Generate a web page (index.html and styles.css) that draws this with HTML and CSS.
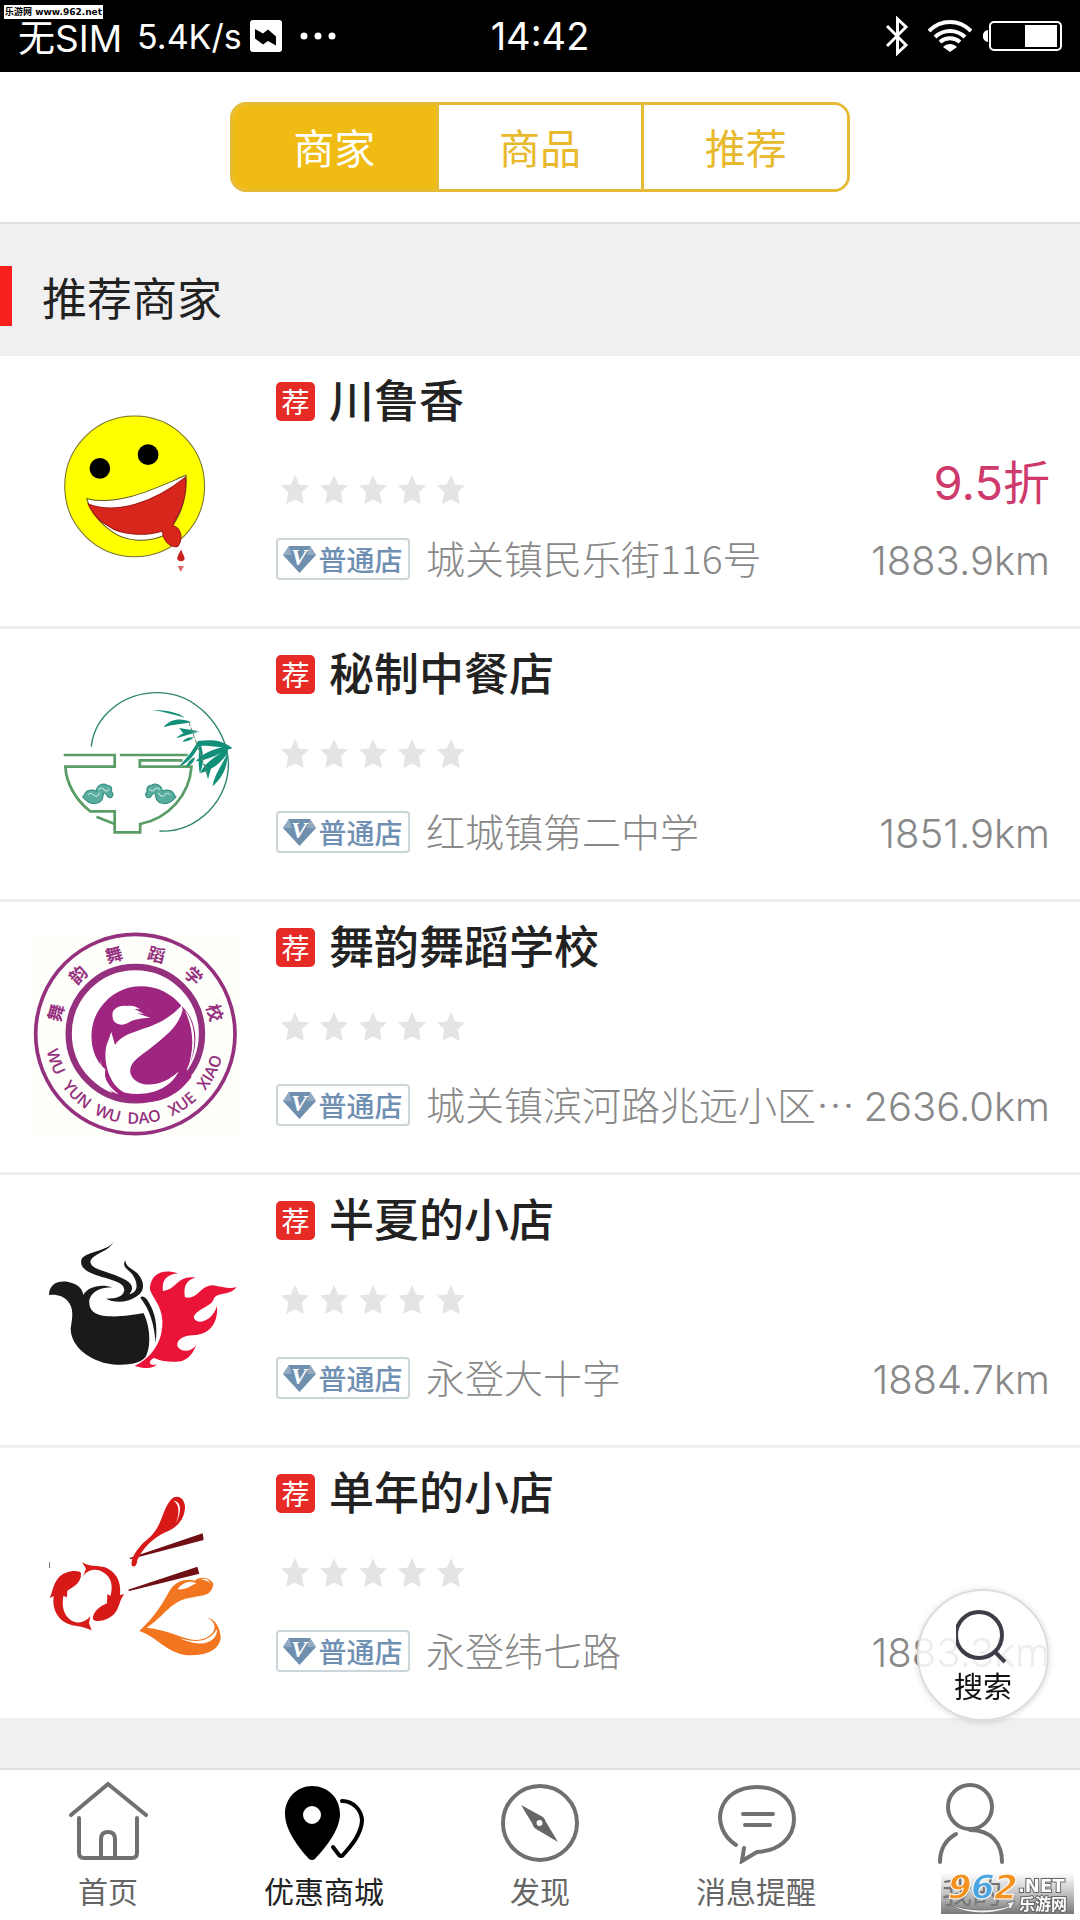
FILE: index.html
```html
<!DOCTYPE html>
<html lang="zh-CN">
<head>
    <meta charset="UTF-8">
    <meta name="viewport" content="width=device-width, initial-scale=1.0">
    <title>优惠商城</title>
    <link rel="stylesheet" href="styles.css">
</head>
<body>
    <svg class="defs" aria-hidden="true">
        <symbol id="star" viewBox="0 0 28 29">
            <path d="M14 0l4.200 9.400 9.800 1-7.200 6.900 2 11.700-8.800-4.600L5.200 29l2-11.700L0 10.400l9.800-1z"/>
        </symbol>
        <symbol id="stars" viewBox="0 0 184 29">
            <use href="#star" x="0" width="28" height="29"/>
            <use href="#star" x="39" width="28" height="29"/>
            <use href="#star" x="78" width="28" height="29"/>
            <use href="#star" x="117" width="28" height="29"/>
            <use href="#star" x="156" width="28" height="29"/>
        </symbol>
        <symbol id="diamond" viewBox="0 0 33 28">
            <path fill="#6f8fae" d="M6 1h21l6 9-16.500 18L0 10z"/>
            <path fill="#92aac2" d="M6 1l3 9H0zM27 1l-3 9h9z"/>
            <text x="16" y="20" text-anchor="middle" font-family="Liberation Serif, serif" font-size="24" font-weight="bold" font-style="italic" fill="#fff">V</text>
        </symbol>
    </svg>

    <div class="status-bar">
        <div class="status-left">
            <span class="sim">无SIM</span>
            <span class="speed">5.4K/s</span>
            <svg class="app-mark" viewBox="0 0 32 32">
                <rect width="32" height="32" rx="3" fill="#fff"/>
                <path d="M5 9l8 4.500 5-4 8 7v9l-8-4.500-5 3.500-8-6z"/>
            </svg>
            <svg class="dots" viewBox="0 0 36 8" fill="#fff"><circle cx="4" cy="4" r="3.500"/><circle cx="18" cy="4" r="3.500"/><circle cx="32" cy="4" r="3.500"/></svg>
        </div>
        <div class="clock">14:42</div>
        <div class="status-right">
            <svg class="bluetooth" viewBox="0 0 22 40" fill="none" stroke="#fff" stroke-width="3"><path d="M1 10l19 19-8.500 8V3l8.500 8L1 30"/></svg>
            <svg class="wifi" viewBox="0 0 44 32" fill="none" stroke="#fff" stroke-width="4">
                <path d="M1 11C13-1 31-1 43 11M7 17c9-8 21-8 30 0M12 22c6-5 14-5 20 0"/>
                <path fill="#fff" stroke="none" d="M15 27c4-4 10-4 14 0l-7 5z"/>
            </svg>
            <svg class="battery" viewBox="0 0 79 30">
                <path fill="#fff" d="M5 9v12c-7-1-7-11 0-12z"/>
                <rect x="7" y="1" width="71" height="28" rx="4" fill="none" stroke="#fff" stroke-width="2"/>
                <rect x="42" y="4" width="32" height="22" fill="#fff"/>
            </svg>
        </div>
        <span class="site-mark">乐游网 www.962.net</span>
    </div>

    <header class="header">
        <div class="segment">
            <button type="button" class="active">商家</button>
            <button type="button">商品</button>
            <button type="button">推荐</button>
        </div>
    </header>

    <main class="main">
        <h1 class="section-title">推荐商家</h1>
        <ul class="shop-list">
            <li>
                <a class="shop" href="#">
                    <svg class="logo" viewBox="93 108 598 618" preserveAspectRatio="none">
                        <ellipse cx="391" cy="409" rx="203" ry="211" fill="#ff0" stroke="#77702a" stroke-width="3"/>
                        <ellipse cx="290" cy="355" rx="30" ry="31"/>
                        <ellipse cx="430" cy="314" rx="30" ry="31"/>
                        <path fill="#fff" stroke="#5c5a20" stroke-width="3" d="M252 446C345 470 450 415 540 376C545 430 528 490 500 528L480 555C430 577 370 578 325 545C285 515 262 485 252 446z"/>
                        <path fill="#d8261c" stroke="#a01812" stroke-width="3" d="M256 462C340 495 450 455 538 382C543 430 530 475 507 512L502 527C530 535 530 570 517 588C500 597 472 575 472 543C420 560 350 555 315 528C285 512 268 490 256 462z"/>
                        <path fill="#c8201c" d="M526 598c-6 14-16 26-9 33 7 5 20 3 19-6-1-10-8-16-10-27z"/>
                        <path fill="#d66" d="M516 648h18l-9 18z"/>
                    </svg>
                    <div class="info">
                        <h2 class="name"><span class="badge">荐</span>川鲁香</h2>
                        <div class="rate">
                            <svg class="stars"><use href="#stars"/></svg>
                            <span class="discount">9.5折</span>
                        </div>
                        <div class="place">
                            <span class="level"><svg><use href="#diamond"/></svg>普通店</span>
                            <span class="address">城关镇民乐街116号</span>
                            <span class="distance">1883.9km</span>
                        </div>
                    </div>
                </a>
            </li>
            <li>
                <a class="shop" href="#">
                    <svg class="logo" viewBox="93 57 598 618" preserveAspectRatio="none">
                        <g fill="none" stroke="#2d8570" stroke-width="4">
                            <path d="M265 320C275 225 360 157 460 158C570 160 655 260 663 365C668 475 575 580 463 573"/>
                        </g>
                        <g fill="none" stroke="#5a9d66" stroke-width="8">
                            <path d="M185 345H333V380H190C192 430 220 480 262 514H333V577H407V552C490 535 550 465 556 380H406V361H530M348 345H545M280 530L333 552"/>
                        </g>
                        <g fill="#118f79">
                            <path d="M443 211c35-2 75 6 94 22-30-8-60-18-94-22zM475 262c20-28 55-28 80-15-30 6-55 7-80 15zM520 264l60 10-48 6zM512 295c15-18 35-20 62-17-25 4-42 10-62 17zM530 306c8-12 18-14 32-14-8 9-17 12-32 14z"/>
                            <path d="M675 325C640 295 605 300 575 303c-15 28-30 48-55 76 30-12 45-36 58-60 0 30-4 50 2 80 12-22 12-55 4-82 20 0 40 2 60 5-30 8-54 18-76 42 30-4 60-15 86-34-38 26-62 42-73 70 35-10 62-32 80-62-20 45-38 65-44 101 32-28 46-65 44-110z"/>
                            <path d="M566 352c-16 6-22 20-26 28 15-4 24-14 26-28zM590 370l14 48 8-30z"/>
                        </g>
                        <path d="M548 245L605 410" stroke="#6a8c72" stroke-width="3" stroke-dasharray="14 5"/>
                        <g fill="#58ad9f" stroke="#308c7e" stroke-width="3">
                            <path d="M240 471c5-2 5-18 20-20 10-2 15 0 20 2 0-18 20-25 30-18 14 0 16 12 14 20 8 8 2 20-5 18-10 0-8-14-18-14-3 10 0 28-22 31-20 4-30-10-39-19z"/>
                            <path d="M511 471c-5-2-5-18-20-20-10-2-15 0-20 2 0-18-20-25-30-18-14 0-16 12-14 20-8 8-2 20 5 18 10 0 8-14 18-14 3 10 0 28 22 31 20 4 30-10 39-19z"/>
                            <path fill="none" stroke="#c8e8e0" d="M256 465q8-10 16 0t18-6M286 449q8-10 16 0t14-3M494 465q-8-10-16 0t-18-6M464 449q-8-10-16 0t-14-3"/>
                        </g>
                    </svg>
                    <div class="info">
                        <h2 class="name"><span class="badge">荐</span>秘制中餐店</h2>
                        <div class="rate"><svg class="stars"><use href="#stars"/></svg></div>
                        <div class="place">
                            <span class="level"><svg><use href="#diamond"/></svg>普通店</span>
                            <span class="address">红城镇第二中学</span>
                            <span class="distance">1851.9km</span>
                        </div>
                    </div>
                </a>
            </li>
            <li>
                <a class="shop" href="#">
                    <svg class="logo" viewBox="96 66 618 618">
                        <rect x="96" y="66" width="618" height="618" fill="#fefefa"/>
                        <circle cx="406" cy="372" r="299" fill="none" stroke="#95307f" stroke-width="11"/>
                        <circle cx="406" cy="371" r="200" fill="#fff" stroke="#95307f" stroke-width="19"/>
                        <!-- bird -->
                        <path fill="#9f2680" d="M316 478C268 440 260 350 300 295C360 205 485 210 545 288C605 345 590 430 560 478L575 500C510 590 420 590 340 552C322 530 312 505 316 478z"/>
                        <path fill="#fff" d="M548 300C535 350 500 375 455 412C420 440 380 460 393 495C412 535 485 535 536 484C510 540 440 562 375 548C325 525 308 450 320 405L334 366L345 405C380 350 470 370 545 286zM554 300C592 345 590 420 563 476C585 410 580 355 554 300z"/>
                        <path fill="#fff" d="M338 322C332 295 360 285 380 288C398 285 410 290 420 298L403 297L432 311L412 310L452 324C420 324 400 328 382 340C362 350 338 340 338 322z"/>
                        <path fill="#fff" d="M302 450C308 500 325 530 355 552C325 545 300 510 302 450z"/>
                        <g class="seal-cn">
                            <text x="406" y="145" transform="rotate(-75 406 372)">舞</text>
                            <text x="406" y="145" transform="rotate(-44 406 372)">韵</text>
                            <text x="406" y="145" transform="rotate(-15 406 372)">舞</text>
                            <text x="406" y="145" transform="rotate(15 406 372)">蹈</text>
                            <text x="406" y="145" transform="rotate(45 406 372)">学</text>
                            <text x="406" y="145" transform="rotate(75 406 372)">校</text>
                        </g>
                        <path id="sealArc" fill="none" d="M136 372A270 270 0 0 0 676 372"/>
                        <g class="seal-en">
                            <text><textPath href="#sealArc" startOffset="91">WU</textPath></text>
                            <text><textPath href="#sealArc" startOffset="217">YUN</textPath></text>
                            <text><textPath href="#sealArc" startOffset="335">WU</textPath></text>
                            <text><textPath href="#sealArc" startOffset="452">DAO</textPath></text>
                            <text><textPath href="#sealArc" startOffset="582">XUE</textPath></text>
                            <text><textPath href="#sealArc" startOffset="720">XIAO</textPath></text>
                        </g>
                    </svg>
                    <div class="info">
                        <h2 class="name"><span class="badge">荐</span>舞韵舞蹈学校</h2>
                        <div class="rate"><svg class="stars"><use href="#stars"/></svg></div>
                        <div class="place">
                            <span class="level"><svg><use href="#diamond"/></svg>普通店</span>
                            <span class="address">城关镇滨河路兆远小区门口</span>
                            <span class="distance">2636.0km</span>
                        </div>
                    </div>
                </a>
            </li>
            <li>
                <a class="shop" href="#">
                    <svg class="logo" viewBox="96 15 618 618">
                        <g fill="#1a1a1a">
                            <path d="M147 285C147 252 175 240 205 246C235 252 248 268 250 285C262 262 300 250 338 262C300 262 275 275 268 300C265 335 290 348 330 349C370 350 400 345 430 339C450 375 455 440 436 472C415 498 350 498 310 488C250 470 212 430 212 385C218 350 222 325 203 303C190 288 170 282 147 285z"/>
                            <path d="M342 125C320 160 275 160 271 186C275 210 320 212 360 232C395 246 405 262 388 283C415 278 415 250 398 224C380 205 365 200 376 180C376 200 395 205 412 220C440 250 430 280 408 290C380 310 340 308 318 296C350 296 370 290 373 270C372 245 330 240 290 226C255 214 240 200 244 180C250 155 320 155 342 125z"/>
                            <path d="M421 293C425 286 435 290 442 300C465 335 474 375 467 428C462 370 450 330 421 293z"/>
                        </g>
                        <path fill="#ea1439" d="M404 498C440 480 490 440 487 360C485 310 445 280 450 260C455 220 490 205 533 220C495 225 485 245 489 273C530 270 530 225 587 233C555 240 550 265 555 292C595 300 600 255 640 256C670 262 690 268 710 261C690 288 655 275 642 295C638 320 590 325 581 352C585 375 635 370 651 318C655 375 625 400 590 405C545 405 530 420 532 438C545 460 575 455 589 435C575 470 555 488 520 485C500 485 480 483 462 474C440 485 450 500 470 493C460 508 430 506 404 498z"/>
                    </svg>
                    <div class="info">
                        <h2 class="name"><span class="badge">荐</span>半夏的小店</h2>
                        <div class="rate"><svg class="stars"><use href="#stars"/></svg></div>
                        <div class="place">
                            <span class="level"><svg><use href="#diamond"/></svg>普通店</span>
                            <span class="address">永登大十字</span>
                            <span class="distance">1884.7km</span>
                        </div>
                    </div>
                </a>
            </li>
            <li>
                <a class="shop" href="#">
                    <svg class="logo" viewBox="96 54 618 618">
                        <path fill="#777" d="M147 307h3v17h-3z"/>
                        <!-- fish -->
                        <path fill="#d71a18" d="M243 340C240 328 190 330 172 358C158 378 158 395 149 415L161 408C155 450 175 480 205 492C225 500 240 496 275 511L267 490L271 469C255 488 235 492 215 482C190 465 185 440 190 408L201 412L202 392C222 380 245 368 243 340z"/>
                        <path fill="#d71a18" d="M246 306L258 326L250 347C265 327 290 325 308 336C335 350 340 380 331 408L322 402L321 430C300 438 280 455 278 476C284 490 335 484 352 448C362 425 362 415 373 403L360 405C365 360 345 335 315 322C290 315 270 322 246 306z"/>
                        <!-- chopsticks and spoon -->
                        <path fill="#701014" d="M389 294L608 220L611 240L390 298zM384 389L592 320L598 341L388 393z"/>
                        <path fill="#d71a18" d="M512 120C525 102 552 108 555 138C556 175 530 205 498 216C465 230 430 260 412 300C410 318 404 322 396 318C390 300 405 275 430 248C490 205 480 160 512 120z"/>
                        <path fill="#fff" d="M521 122C545 125 545 155 528 190C538 160 540 135 521 122z"/>
                        <path fill="#f27620" d="M418 513C470 465 490 425 510 390C530 358 565 355 585 362C600 345 635 355 640 372C635 410 605 405 580 412C510 420 500 465 440 503C500 508 545 535 585 540C625 540 645 515 644 500C642 485 633 478 622 473C645 475 662 505 662 535C655 580 600 590 550 584C490 570 470 530 418 513z"/>
                        <path fill="#fff" d="M533 388C545 370 568 358 589 370C575 375 565 390 533 388zM602 358C615 352 628 360 630 369C622 362 612 360 602 358zM540 535C590 550 630 545 650 507C655 530 630 555 590 550C570 548 555 542 540 535z"/>
                    </svg>
                    <div class="info">
                        <h2 class="name"><span class="badge">荐</span>单年的小店</h2>
                        <div class="rate"><svg class="stars"><use href="#stars"/></svg></div>
                        <div class="place">
                            <span class="level"><svg><use href="#diamond"/></svg>普通店</span>
                            <span class="address">永登纬七路</span>
                            <span class="distance">1883.3km</span>
                        </div>
                    </div>
                </a>
            </li>
        </ul>
    </main>

    <nav class="tab-bar">
        <a href="#">
            <svg viewBox="0 0 80 84"><path d="M3 35L40 4l38 31M11 38v35q0 5 5 5h48q5 0 5-5V38M33 78V59q0-7 7-7t7 7v19"/></svg>
            首页
        </a>
        <a href="#" class="active">
            <svg viewBox="0 0 80 84">
                <path class="solid" fill-rule="evenodd" d="M28 6C44 6 56 18 56 34C56 52 38 71 31 79Q28 81 25 79C18 71 1 52 1 34C1 18 13 6 28 6zM28 26a9 9 0 1 0 0 18a9 9 0 1 0 0-18z"/>
                <path d="M58 21C70 21 78 31 78 41C77 55 66 67 59 75Q57 77 55 75L49 67"/>
            </svg>
            优惠商城
        </a>
        <a href="#">
            <svg viewBox="0 0 80 84">
                <circle cx="40" cy="43" r="37"/>
                <path class="solid" fill-rule="evenodd" d="M21 25L43 37Q45 39 46 42L58 62L36 49Q33 47 32 43zM39.500 40a3 3 0 1 0 0 6a3 3 0 1 0 0-6z"/>
            </svg>
            发现
        </a>
        <a href="#">
            <svg viewBox="0 0 80 84"><path d="M20 65C-8 46 2 7 41 7C65 7 78 22 78 39C78 58 63 71 41 72L26 81L28 68M27 34h30M29 45h25"/></svg>
            消息提醒
        </a>
        <a href="#">
            <svg viewBox="0 0 80 84"><circle cx="38" cy="27" r="22"/><path d="M24 54Q8 63 8 82M38 50C60 50 70 64 70 82"/></svg>
            我的
        </a>
    </nav>

    <button type="button" class="search">
        <svg viewBox="3 0 54 56"><circle cx="26" cy="26" r="23"/><path d="M42 43l10 10"/></svg>
        搜索
    </button>

    <svg class="corner-mark" viewBox="0 0 133 42">
        <defs>
            <linearGradient id="fade" x2="0" y2="1"><stop offset="0" stop-color="#999" stop-opacity="0"/><stop offset="1" stop-color="#777"/></linearGradient>
        </defs>
        <rect width="133" height="42" fill="url(#fade)"/>
        <path fill="#eee" stroke="#777" d="M8 32C25 39 50 40 68 34L66 31L74 29L70 37L68 36C48 44 22 42 8 32z"/>
        <g class="corner-num">
            <text x="7" y="27" fill="#f3921f">9</text>
            <text x="30" y="27" fill="#4ba6e0">6</text>
            <text x="53" y="27" fill="#f3921f">2</text>
        </g>
        <text class="corner-net" x="77" y="20">.NET</text>
        <text class="corner-cn" x="78" y="38">乐游网</text>
    </svg>
</body>
</html>
```
FILE: styles.css
```css
html,body{
    margin: 0;
    padding: 0;
}
body{
    display: flex;
    flex-direction: column;
    min-height: 100vh;
    background-color: #f0f0f0;
    color: #222;
    font-family: "Noto Sans CJK SC", sans-serif;
}
button{
    padding: 0;
    font-family: inherit;
    cursor: pointer;
}
a{
    color: inherit;
    text-decoration: none;
}
h1,h2,ul{
    margin: 0;
    padding: 0;
}
.defs{
    position: absolute;
    width: 0;
    height: 0;
}

/* status bar */
.status-bar{
    position: relative;
    display: grid;
    grid-template-columns: 1fr auto 1fr;
    align-items: center;
    height: 72px;
    padding: 0 18px;
    background-color: #000;
    color: #fff;
    font-family: Inter, "Noto Sans CJK SC", sans-serif;
}
.status-left,.status-right{
    display: flex;
    align-items: center;
}
.status-right{
    justify-content: flex-end;
}
.sim{
    margin-right: 15px;
    font-size: 37px;
}
.speed{
    font-size: 34px;
}
.clock{
    font-size: 38px;
}
.app-mark{
    width: 32px;
    height: 32px;
    margin: 0 18px 0 8px;
}
.dots{
    width: 36px;
    height: 8px;
}
.bluetooth{
    width: 22px;
    height: 40px;
    margin-right: 20px;
}
.wifi{
    width: 44px;
    height: 32px;
    margin-right: 11px;
}
.battery{
    width: 79px;
    height: 30px;
}
.site-mark{
    position: absolute;
    top: 5px;
    left: 4px;
    padding: 0 1px;
    background-color: #fff;
    color: #000;
    font: bold 9px/14px "DejaVu Sans", "Noto Sans CJK SC", sans-serif;
}

/* header */
.header{
    display: flex;
    justify-content: center;
    padding: 30px 0;
    border-bottom: 2px solid #e2e2e2;
    background-color: #fff;
}
.segment{
    display: flex;
    width: 620px;
    height: 90px;
    box-sizing: border-box;
    border: 3px solid #e5bb35;
    border-radius: 16px;
    overflow: hidden;
}
.segment button{
    flex: 1;
    padding-bottom: 2px;
    border: 0;
    background-color: #fff;
    color: #e8b92c;
    font-size: 41px;
}
.segment button+button{
    border-left: 3px solid #e5bb35;
}
.segment .active{
    background-color: #f0bb12;
    color: #fff;
}

/* shops */
.main{
    flex: 1;
}
.section-title{
    display: flex;
    align-items: center;
    height: 132px;
    padding-top: 12px;
    box-sizing: border-box;
    color: #222;
    font-size: 45px;
    font-weight: normal;
}
.section-title::before{
    content: "";
    width: 12px;
    height: 60px;
    margin-right: 30px;
    background-color: #f8201c;
}
.shop-list{
    list-style: none;
    background-color: #fff;
}
.shop-list li+li{
    border-top: 3px solid #eee;
}
.shop{
    display: flex;
    gap: 38px;
    padding: 22px 30px 46px 32px;
}
.logo{
    flex: none;
    width: 206px;
    height: 206px;
    margin: 8px 0 -12px;
}
.info{
    flex: 1;
    min-width: 0;
    display: flex;
    flex-direction: column;
}
.name{
    display: flex;
    align-items: flex-start;
    gap: 14px;
    height: 48px;
    font-size: 45px;
    font-weight: 500;
    line-height: 42px;
}
.badge{
    width: 39px;
    margin-top: 4px;
    border-radius: 5px;
    background-color: #e62b26;
    color: #fff;
    font-size: 28px;
    font-weight: normal;
    line-height: 39px;
    text-align: center;
}
.rate{
    display: flex;
    align-items: flex-end;
    justify-content: space-between;
    margin-top: 40px;
    padding-left: 5px;
}
.stars{
    width: 184px;
    height: 29px;
    fill: #e4e4e4;
}
.discount{
    padding-bottom: 4px;
    color: #cf3a6c;
    font-family: Inter, "Noto Sans CJK SC", sans-serif;
    font-size: 47px;
    line-height: 34px;
}
.place{
    display: flex;
    align-items: center;
    gap: 16px;
    height: 42px;
    margin-top: auto;
    color: #888;
    font-size: 39px;
    font-weight: 300;
}
.level{
    flex: none;
    display: flex;
    align-items: center;
    justify-content: center;
    gap: 2px;
    width: 134px;
    height: 42px;
    box-sizing: border-box;
    border: 2px solid #ccd5da;
    border-radius: 4px;
    color: #6f8fb3;
    font-size: 28px;
    font-weight: 500;
}
.level svg{
    width: 33px;
    height: 28px;
}
.address{
    flex: 1;
    margin: 0 -12px 4px 0;
    overflow: hidden;
    line-height: 60px;
    text-overflow: ellipsis;
    white-space: nowrap;
}
.distance{
    padding-top: 2px;
    font-family: Inter, "Noto Sans CJK SC", sans-serif;
    font-size: 40px;
}
.seal-cn{
    fill: #95307f;
    font-size: 52px;
    font-weight: bold;
    text-anchor: middle;
}
.seal-en{
    fill: #95307f;
    font-family: "Open Sans", sans-serif;
    font-size: 48px;
    font-weight: 600;
    text-anchor: middle;
}

/* search button */
.search{
    position: fixed;
    right: 31px;
    bottom: 199px;
    display: flex;
    flex-direction: column;
    align-items: center;
    justify-content: center;
    width: 132px;
    height: 132px;
    padding-top: 4px;
    border: 2px solid #ddd;
    border-radius: 50%;
    background-color: rgba(255,255,255,.85);
    box-shadow: 0 1px 6px rgba(0,0,0,.15);
    color: #111;
    font-size: 29px;
    line-height: 40px;
}
.search svg{
    width: 54px;
    height: 56px;
    fill: none;
    stroke: #3d3d47;
    stroke-width: 4;
}

/* bottom tabs */
.tab-bar{
    display: flex;
    height: 150px;
    border-top: 2px solid #e2e2e2;
    background-color: #fff;
}
.tab-bar a{
    flex: 1;
    display: flex;
    flex-direction: column;
    align-items: center;
    gap: 4px;
    padding-top: 10px;
    color: #666;
    font-size: 30px;
    line-height: 44px;
}
.tab-bar svg{
    width: 80px;
    height: 84px;
    fill: none;
    stroke: #707070;
    stroke-width: 4;
    stroke-linecap: round;
}
.tab-bar .solid{
    fill: #666;
    stroke: none;
}
.tab-bar .active{
    color: #222;
}
.tab-bar .active svg{
    stroke: #000;
}
.tab-bar .active .solid{
    fill: #000;
}

/* site mark in the corner */
.corner-mark{
    position: fixed;
    right: 6px;
    bottom: 6px;
    width: 133px;
    height: 42px;
    font-family: "DejaVu Sans", sans-serif;
    font-weight: bold;
    pointer-events: none;
}
.corner-num{
    font-size: 34px;
    font-style: italic;
    stroke: #fff;
    stroke-width: 1;
}
.corner-net,.corner-cn{
    fill: #fff;
    stroke: #666;
    stroke-width: 2;
    paint-order: stroke;
    font-size: 18px;
}
.corner-cn{
    font-family: "Noto Sans CJK SC", sans-serif;
    font-size: 16px;
}
```
